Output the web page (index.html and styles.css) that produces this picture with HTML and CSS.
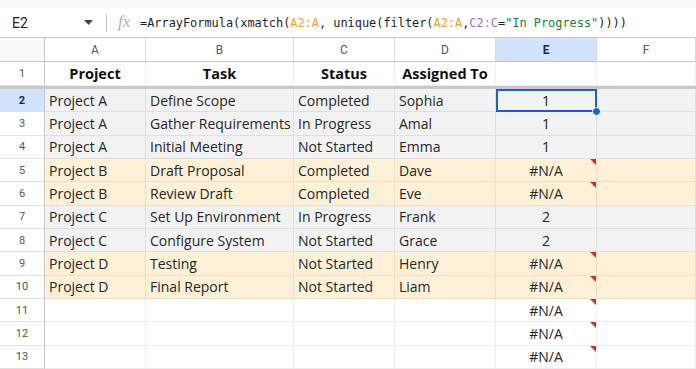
FILE: index.html
```html
<!DOCTYPE html>
<html lang="en">
<head>
    <meta charset="UTF-8">
    <meta name="viewport" content="width=device-width, initial-scale=1.0">
    <title>xmatch unique filter</title>
    <link rel="stylesheet" href="styles.css">
</head>
<body>
    <div class="formula-bar">
        <div class="name-box">E2</div>
        <svg class="caret" width="9" height="5" viewBox="0 0 9 5"><path d="M0 0h9L4.5 5z" fill="#444"/></svg>
        <div class="separator"></div>
        <div class="fx">fx</div>
        <div class="formula">=ArrayFormula(xmatch(<span class="ref-a">A2:A</span>, unique(filter(<span class="ref-a">A2:A</span>,<span class="ref-c">C2:C</span>=<span class="str">"In Progress"</span>))))</div>
    </div>

    <div class="sheet">
        <div class="row col-heads">
            <div class="corner"></div>
            <div class="col-head">A</div>
            <div class="col-head">B</div>
            <div class="col-head">C</div>
            <div class="col-head">D</div>
            <div class="col-head active">E</div>
            <div class="col-head">F</div>
        </div>

        <div class="row header-row">
            <div class="row-num">1</div>
            <div class="cell head">Project</div>
            <div class="cell head">Task</div>
            <div class="cell head">Status</div>
            <div class="cell head">Assigned To</div>
            <div class="cell"></div>
            <div class="cell"></div>
        </div>

        <div class="frozen"></div>

        <div class="row data gray">
            <div class="row-num active">2</div>
            <div class="cell">Project A</div>
            <div class="cell">Define Scope</div>
            <div class="cell">Completed</div>
            <div class="cell">Sophia</div>
            <div class="cell num selected">1<span class="handle"></span></div>
            <div class="cell"></div>
        </div>
        <div class="row data gray">
            <div class="row-num">3</div>
            <div class="cell">Project A</div>
            <div class="cell">Gather Requirements</div>
            <div class="cell">In Progress</div>
            <div class="cell">Amal</div>
            <div class="cell num">1</div>
            <div class="cell"></div>
        </div>
        <div class="row data gray">
            <div class="row-num">4</div>
            <div class="cell">Project A</div>
            <div class="cell">Initial Meeting</div>
            <div class="cell">Not Started</div>
            <div class="cell">Emma</div>
            <div class="cell num">1</div>
            <div class="cell"></div>
        </div>
        <div class="row data yellow">
            <div class="row-num">5</div>
            <div class="cell">Project B</div>
            <div class="cell">Draft Proposal</div>
            <div class="cell">Completed</div>
            <div class="cell">Dave</div>
            <div class="cell num error">#N/A</div>
            <div class="cell"></div>
        </div>
        <div class="row data yellow">
            <div class="row-num">6</div>
            <div class="cell">Project B</div>
            <div class="cell">Review Draft</div>
            <div class="cell">Completed</div>
            <div class="cell">Eve</div>
            <div class="cell num error">#N/A</div>
            <div class="cell"></div>
        </div>
        <div class="row data gray">
            <div class="row-num">7</div>
            <div class="cell">Project C</div>
            <div class="cell">Set Up Environment</div>
            <div class="cell">In Progress</div>
            <div class="cell">Frank</div>
            <div class="cell num">2</div>
            <div class="cell"></div>
        </div>
        <div class="row data gray">
            <div class="row-num">8</div>
            <div class="cell">Project C</div>
            <div class="cell">Configure System</div>
            <div class="cell">Not Started</div>
            <div class="cell">Grace</div>
            <div class="cell num">2</div>
            <div class="cell"></div>
        </div>
        <div class="row data yellow">
            <div class="row-num">9</div>
            <div class="cell">Project D</div>
            <div class="cell">Testing</div>
            <div class="cell">Not Started</div>
            <div class="cell">Henry</div>
            <div class="cell num error">#N/A</div>
            <div class="cell"></div>
        </div>
        <div class="row data yellow">
            <div class="row-num">10</div>
            <div class="cell">Project D</div>
            <div class="cell">Final Report</div>
            <div class="cell">Not Started</div>
            <div class="cell">Liam</div>
            <div class="cell num error">#N/A</div>
            <div class="cell"></div>
        </div>
        <div class="row data">
            <div class="row-num">11</div>
            <div class="cell"></div>
            <div class="cell"></div>
            <div class="cell"></div>
            <div class="cell"></div>
            <div class="cell num error">#N/A</div>
            <div class="cell"></div>
        </div>
        <div class="row data">
            <div class="row-num">12</div>
            <div class="cell"></div>
            <div class="cell"></div>
            <div class="cell"></div>
            <div class="cell"></div>
            <div class="cell num error">#N/A</div>
            <div class="cell"></div>
        </div>
        <div class="row data">
            <div class="row-num">13</div>
            <div class="cell"></div>
            <div class="cell"></div>
            <div class="cell"></div>
            <div class="cell"></div>
            <div class="cell num error">#N/A</div>
            <div class="cell"></div>
        </div>
    </div>
</body>
</html>
```

FILE: styles.css
```css
/* Basic Reset */
* {
    box-sizing: border-box;
    margin: 0;
    padding: 0;
}

body {
    font-family: "Open Sans", Arial, sans-serif;
    background-color: #f9fbfd;
    width: 696px;
    height: 369px;
    overflow: hidden;
}

/* Formula bar */
.formula-bar {
    margin-top: 8px;
    height: 30px;
    background-color: #fff;
    border-bottom: 1px solid #c7c7c7;
    display: flex;
    align-items: center;
}

.name-box {
    font-family: Roboto, Arial, sans-serif;
    font-size: 14px;
    color: #1f1f1f;
    width: 84px;
    padding-left: 12px;
}

.caret {
    margin-right: 13px;
}

.separator {
    width: 1px;
    height: 18px;
    background-color: #c7c7c7;
    margin-right: 11px;
}

.fx {
    font-family: "Liberation Serif", serif;
    font-style: italic;
    font-size: 17px;
    color: #b0b0b0;
    width: 22px;
    margin-top: -2px;
}

.formula {
    font-family: "DejaVu Sans Mono", monospace;
    font-size: 11.9px;
    color: #1f1f1f;
    white-space: nowrap;
}

.ref-a {
    color: #f0a030;
}

.ref-c {
    color: #a26fd0;
}

.str {
    color: #188038;
}

/* Sheet grid */
.row {
    display: grid;
    grid-template-columns: 45px 101px 148px 101px 101px 101px 1fr;
    background-color: #fff;
}

.col-heads {
    height: 24px;
}

.header-row {
    height: 24px;
}

.data {
    height: 23.33px;
}

.gray {
    background-color: #f2f2f2;
}

.yellow {
    background-color: #fef1d7;
}

.corner {
    background-color: #f8f9fa;
    border-right: 1px solid #c4c7c5;
    border-bottom: 1px solid #c4c7c5;
}

.col-head {
    font-family: Roboto, Arial, sans-serif;
    font-size: 12px;
    color: #575757;
    display: flex;
    justify-content: center;
    align-items: center;
    border-right: 1px solid #dadada;
    border-bottom: 1px solid #c4c7c5;
    background-color: #fff;
}

.col-head.active {
    background-color: #d3e3fd;
    color: #0b2d6b;
    font-weight: bold;
}

.row-num {
    font-family: Roboto, Arial, sans-serif;
    font-size: 11px;
    color: #575757;
    display: flex;
    justify-content: center;
    align-items: center;
    background-color: #fff;
    border-right: 1px solid #c4c7c5;
    border-bottom: 1px solid #e1e1e1;
}

.row-num.active {
    background-color: #d3e3fd;
    color: #0b2d6b;
    font-weight: bold;
}

.cell {
    position: relative;
    font-size: 14px;
    color: #262626;
    padding-left: 4px;
    white-space: nowrap;
    overflow: hidden;
    display: flex;
    align-items: center;
    border-right: 1px solid rgba(0, 0, 0, 0.07);
    border-bottom: 1px solid rgba(0, 0, 0, 0.07);
}

.head {
    font-weight: bold;
    color: #111;
    font-size: 14.5px;
    justify-content: center;
    padding-left: 0;
}

.num {
    justify-content: center;
    padding-left: 0;
    overflow: visible;
}

.frozen {
    height: 3px;
    background-color: #c8c8c8;
}

/* Selected cell E2 */
.selected {
    outline: 2px solid #1a5fd0;
    outline-offset: -2px;
    z-index: 2;
}

.handle {
    position: absolute;
    right: -5px;
    bottom: -5px;
    width: 9px;
    height: 9px;
    border-radius: 50%;
    background-color: #1a5fd0;
    border: 1px solid #fff;
}

/* Error marker */
.error::after {
    content: "";
    position: absolute;
    top: 0;
    right: 0;
    border-top: 6px solid #d0302a;
    border-left: 6px solid transparent;
}
```
